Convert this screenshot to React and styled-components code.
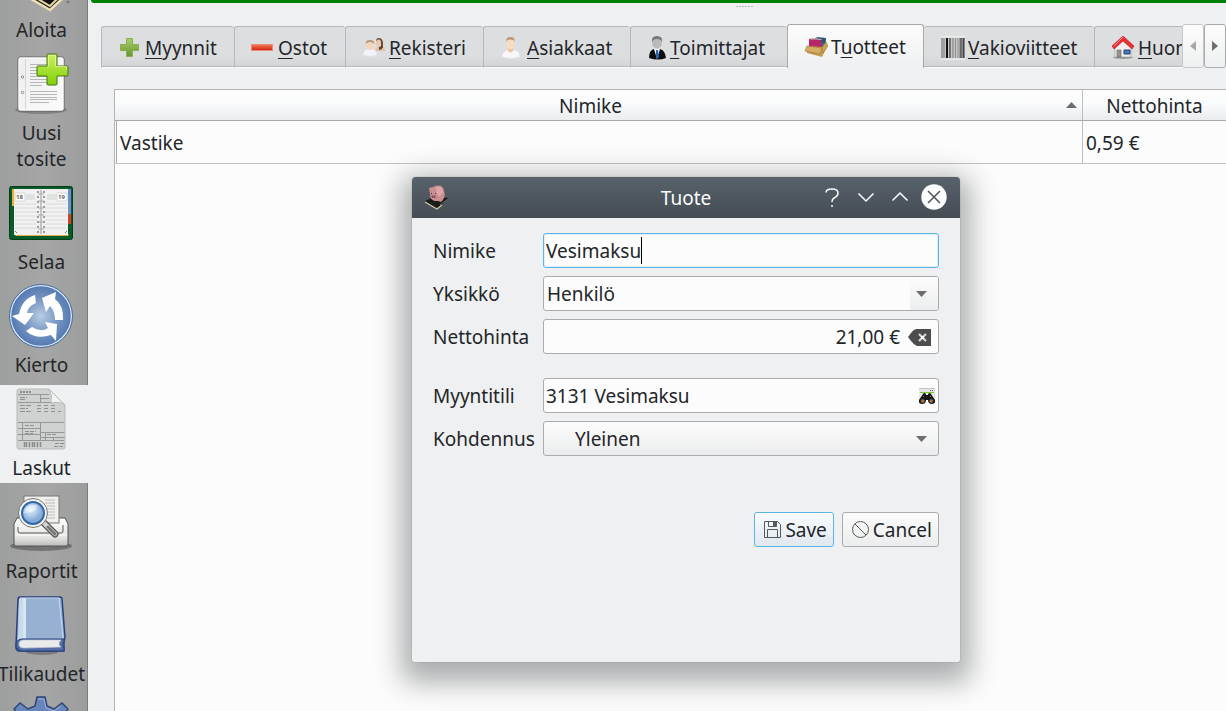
import React from 'react';
import styled, { createGlobalStyle, css } from 'styled-components';

const GlobalStyle = createGlobalStyle`
  * { box-sizing: border-box; }
  html, body, #root { height: 100%; }
  body {
    margin: 0;
    overflow: hidden;
    background: #eff0f1;
    color: #232629;
    font-family: "Noto Sans", sans-serif;
    font-size: 19px;
    line-height: 26px;
  }
  button, input, select { font: inherit; color: inherit; margin: 0; }
  svg { display: block; flex: none; }
`;

const Desktop = styled.div`
  position: relative;
  display: flex;
  height: 100vh;
  overflow: hidden;
`;

const Sidebar = styled.nav`
  flex: 0 0 88px;
  overflow: hidden;
  background:
    linear-gradient(#7c7d7e, #7c7d7e) right / 1px 100% no-repeat,
    linear-gradient(90deg, #9d9e9e, #a6a6a6 50%, #9b9c9c);
`;

/* The tool list is scrolled so that its first entry is partly hidden. */
const ToolList = styled.div`
  display: flex;
  flex-direction: column;
  gap: 5px;
  margin-top: -53px;
`;

const ToolButton = styled.button`
  display: flex;
  flex-direction: column;
  align-items: center;
  gap: 4px;
  flex: none;
  padding: 2px 6px 2px 0;
  border: 0;
  background: ${(p) => (p.$active ? '#eff0f1' : 'transparent')};
`;

const ToolLabel = styled.span`
  width: 82px;
  padding-left: 1px;
  display: flex;
  justify-content: center;
  text-align: center;
`;

const Main = styled.main`
  flex: 1;
  min-width: 0;
  display: flex;
  flex-direction: column;
`;

const ProgressLine = styled.div`
  flex: none;
  height: 3px;
  margin-left: 3px;
  background: #008000;
  border-bottom-left-radius: 4px;
`;

const Splitter = styled.div`
  flex: none;
  display: flex;
  justify-content: center;
  gap: 1px;
  height: 21px;
  padding: 3px 0 0 174px;
`;

const SplitterDot = styled.span`
  width: 2px;
  height: 1px;
  background: #b9babc;
`;

const TabBar = styled.div`
  flex: none;
  display: flex;
  height: 44px;
  margin-left: 13px;
`;

const Tabs = styled.div`
  flex: 1;
  min-width: 0;
  display: flex;
  align-items: flex-end;
  overflow: hidden;
`;

const Tab = styled.button`
  flex: none;
  width: ${(p) => p.$width}px;
  display: flex;
  align-items: center;
  gap: 3px;
  height: 42px;
  padding: 1px 0 0 16px;
  border: 1px solid #b7b8ba;
  border-right-width: 0;
  border-bottom-color: #fcfcfc;
  border-radius: 3px 3px 0 0;
  background: linear-gradient(#dddee0 70%, #d3d4d6);
  box-shadow: inset 0 -1px #b7b8ba;
  white-space: nowrap;
  ${(p) => p.$selected && css`
    height: 44px;
    padding-bottom: 1px;
    border-right-width: 1px;
    border-color: #a9aaac;
    border-bottom: 0;
    background: linear-gradient(#fcfcfc, #eff0f1);
    box-shadow: none;
    & + button { border-left-width: 0; padding-left: 17px; }
  `}
`;

const Mnemonic = styled.u`
  text-decoration-thickness: 1px;
  text-underline-offset: 3px;
  text-decoration-skip-ink: none;
`;

const TabScroll = styled.button`
  flex: 0 0 22px;
  display: grid;
  place-items: center;
  padding: 0;
  border: 1px solid ${(p) => (p.disabled ? '#c6c7c9' : '#a9aaac')};
  border-radius: 3px;
  background: linear-gradient(#fcfcfc, #eff0f1);
`;

const TableFrame = styled.section`
  flex: 1;
  margin: 21px 0 0 26px;
  border: 1px solid #b2b4b6;
  border-right: 0;
  border-bottom: 0;
  background: #fcfcfc;
`;

const Table = styled.table`
  width: 100%;
  border-collapse: separate;
  border-spacing: 0;
  table-layout: fixed;
`;

const HeaderCell = styled.th`
  width: ${(p) => p.$width || 'auto'};
  height: 31px;
  padding: 2px 0 0;
  font-weight: 400;
  border-bottom: 1px solid #a5a7a9;
  border-left: ${(p) => (p.$divided ? '1px solid #bcbec0' : '0')};
  background: linear-gradient(#fcfcfc, #fafbfc 45%, #ebeced);
`;

const HeaderContent = styled.div`
  display: flex;
  align-items: center;
  padding-right: ${(p) => (p.$sorted ? '5px' : '0')};
  & > svg { margin-bottom: 2px; }
`;

const HeaderTitle = styled.span`
  flex: 1;
  text-align: center;
`;

const Cell = styled.td`
  height: 43px;
  padding: 2px 3px 0;
  border-bottom: 1px solid #c0c1c2;
  border-left: ${(p) => (p.$divided ? '1px solid #bcbec0' : '0')};
  ${(p) => p.$current && css`
    border-left: 1px solid #fcfcfc;
    box-shadow: inset 1px 0 #a5a7a9;
    padding-left: 4px;
  `}
`;

const Dialog = styled.section`
  position: absolute;
  left: 412px;
  top: 177px;
  width: 548px;
  min-height: 485px;
  border-radius: 4px 4px 2px 2px;
  overflow: hidden;
  background: #eff0f1;
  box-shadow: 0 10px 28px 10px rgba(30, 34, 38, 0.37), 0 0 1px #77797b;
`;

const TitleBar = styled.header`
  display: grid;
  grid-template-columns: 1fr auto 1fr;
  align-items: center;
  height: 41px;
  padding: 0 9px;
  color: #fcfcfc;
  background: linear-gradient(#57626a, #454c54);
  & > svg { margin-left: 4px; }
`;

const DialogTitle = styled.h1`
  margin: 0;
  font-size: 19px;
  font-weight: 400;
`;

const WindowButtons = styled.div`
  display: flex;
  justify-content: flex-end;
`;

const WindowButton = styled.button`
  width: 34px;
  height: 34px;
  display: grid;
  place-items: center;
  padding: 0 0 1px;
  border: 0;
  background: none;
`;

const Form = styled.form`
  padding: 15px 21px;
`;

const FieldGroup = styled.div`
  display: grid;
  grid-template-columns: 110px 1fr;
  align-items: center;
  gap: 8px 0;
  margin-bottom: ${(p) => (p.$last ? '56px' : '24px')};
`;

const FieldBox = styled.div`
  position: relative;
  display: flex;
  align-items: center;
  height: 35px;
  border: 1px solid ${(p) => (p.$focused ? '#5ab4e6' : '#a9abad')};
  border-radius: 3px;
  background: ${(p) => (p.$raised ? 'linear-gradient(#fcfcfc, #ebeced)' : '#fcfcfc')};
  box-shadow: ${(p) => (p.$focused ? 'inset 0 0 0 1px #e3eef4' : 'none')};
  overflow: hidden;
`;

const TextInput = styled.input`
  flex: 1;
  min-width: 0;
  height: 33px;
  padding: 0 2px;
  border: 0;
  outline: 0;
  background: transparent;
  text-align: ${(p) => p.$align || 'left'};
`;

const Caret = styled.span`
  position: absolute;
  left: 97px;
  top: 3px;
  width: 1px;
  height: 27px;
  background: #000;
`;

const Select = styled.select`
  appearance: none;
  position: relative;
  width: 100%;
  height: 33px;
  padding: 0 30px 0 ${(p) => (p.$indented ? '31px' : '3px')};
  border: 0;
  outline: 0;
  background: transparent;
`;

const SelectArrow = styled.span`
  position: absolute;
  right: 0;
  width: 28px;
  height: 33px;
  padding-left: 6px;
  display: flex;
  align-items: center;
  background: ${(p) => (p.$shaded ? 'linear-gradient(#fcfcfc, #ecedee)' : 'none')};
  pointer-events: none;
`;

const FieldAction = styled.button`
  flex: none;
  padding: 0 ${(p) => p.$inset} 0 6px;
  border: 0;
  background: none;
`;

const Buttons = styled.div`
  display: flex;
  justify-content: flex-end;
  gap: 8px;
`;

const PushButton = styled.button`
  display: flex;
  align-items: center;
  gap: 3px;
  height: 35px;
  padding: 0 6px 0 9px;
  border: 1px solid ${(p) => (p.$primary ? '#5ab4e6' : '#a9abad')};
  border-radius: 3px;
  background: ${(p) => (p.$primary
    ? 'linear-gradient(#fafcfd, #e0e8ee)'
    : 'linear-gradient(#fcfcfc, #ebeced)')};
`;

/* ---------- sidebar drawings ---------- */

const PiggyLarge = () => (
  <svg width="64" height="64" viewBox="0 0 64 64">
    <path d="M14 46 40 36 56 48 41 62Z" fill="#282521" />
    <path d="M22 50 41 61 53 50" fill="none" stroke="#eee0b8" strokeWidth="2.500" />
    <path d="M29 50 41 57 50 48 40 44Z" fill="#11100f" stroke="#e4d5ac" strokeWidth="2" />
    <path d="M58 54 60 52" stroke="#777" strokeWidth="2" />
  </svg>
);

const NewVoucher = () => (
  <svg width="64" height="64" viewBox="0 0 64 64">
    <defs>
      <linearGradient id="nvPlus" x2="0" y2="1"><stop stopColor="#cdf05a" /><stop offset="1" stopColor="#7fd00b" /></linearGradient>
      <linearGradient id="nvPage" x2="1" y2="1"><stop stopColor="#ededed" /><stop offset="1" stopColor="#fbfbfb" /></linearGradient>
    </defs>
    <ellipse cx="32" cy="58" rx="26" ry="4" fill="#000" opacity=".2" />
    <rect x="9" y="5" width="46" height="54" rx="2" fill="url(#nvPage)" stroke="#636463" />
    <rect x="10" y="6" width="44" height="52" rx="1" fill="none" stroke="#fff" />
    <path d="M16.500 7v50" stroke="#d4d5d4" />
    <g fill="#fff" stroke="#888" ><circle cx="13.500" cy="25" r="1.200" /><circle cx="13.500" cy="40.500" r="1.200" /></g>
    <path d="M21 12.500h26M21 15.500h26M21 18.500h26M21 21.500h26M21 24.500h26M21 27.500h26M21 30.500h26M21 33.500h12M21 39.500h27M21 42.500h27M21 45.500h27M21 47.500h27M21 50.500h19" stroke="#b5b6b5" />
    <path d="M39 2h8q1 0 1 1v11h10q1 0 1 1v8q0 1-1 1H48v8q0 1-1 1h-8q-1 0-1-1v-8h-9q-1 0-1-1v-8q0-1 1-1h9V3q0-1 1-1Z" fill="url(#nvPlus)" stroke="#42750e" />
    <path d="M39.500 14.500V3.500h7v11h11v3" fill="none" stroke="#e4f9a5" opacity=".8" />
  </svg>
);

const Planner = () => (
  <svg width="64" height="64" viewBox="0 0 64 64">
    <rect x=".5" y="5.500" width="63" height="53" rx="2" fill="#075b28" stroke="#033c18" />
    <path d="M3 8h5v17H3Z" fill="#f4aa37" />
    <path d="M56 8h6v26h-6Z" fill="#6d8fd0" />
    <path d="M57 33h5v10h-3l-2 2Z" fill="#d63d22" />
    <path d="M5 53h55l-1 2H7Z" fill="#e5a954" />
    <rect x="5" y="8" width="27" height="46" fill="#f1f1f1" />
    <rect x="32" y="8" width="27" height="46" fill="#f1f1f1" />
    <path d="M6 23h22M6 27h22M6 31h22M6 35h22M6 39h22M6 43h22M6 47h22M36 23h22M36 27h22M36 31h22M36 35h22M36 39h22M36 43h22M36 47h22" stroke="#d9dada" />
    <path d="M17 13h9v6h-9ZM38 13h9v6h-9Z" fill="#e0e1e1" />
    <path d="M6 12h10v8H6ZM48 12h10v8H48Z" fill="#fff" stroke="#d5d5d5" />
    <text x="7" y="18" fontSize="6" fontWeight="700" fill="#666">18</text>
    <text x="49" y="18" fontSize="6" fontWeight="700" fill="#666">19</text>
    <path d="M32 9v44" stroke="#999" strokeWidth="1" />
    <g stroke="#9a9b9b" strokeWidth="2" strokeDasharray="2 3"><path d="M29 10v44M35 10v44" /></g>
    <path d="M29 13h6M29 20h6M29 27h6M29 34h6M29 41h6M29 48h6" stroke="#aaa" />
    <path d="M6 50l2 2M58 50l-2 2" stroke="#777" />
  </svg>
);

const Cycle = () => (
  <svg width="64" height="64" viewBox="0 0 64 64">
    <defs>
      <radialGradient id="cyBg"><stop stopColor="#b9cde4" /><stop offset=".55" stopColor="#7896c3" /><stop offset="1" stopColor="#5379af" /></radialGradient>
    </defs>
    <circle cx="32" cy="32" r="30.500" fill="url(#cyBg)" stroke="#dce9f7" strokeWidth="1.500" />
    <circle cx="32" cy="32" r="31.500" fill="none" stroke="#456ca5" />
    <g fill="#fff">
      <path d="M26 11Q13 15 10 30L3 32 16 41 25 29 18 29Q19 22 27 19Z" />
      <path d="M33 14 47 8 46 15Q55 22 54 36H46Q46 27 41 22L37 28Z" />
      <path d="M23 43Q32 49 39 44L36 38 48 40 47 57 42 51Q27 56 17 47Z" />
    </g>
  </svg>
);

const Invoice = () => (
  <svg width="64" height="64" viewBox="0 0 64 64">
    <defs><linearGradient id="inFold" x2="1" y1="1" y2="0"><stop offset=".4" stopColor="#f3f3f3" /><stop offset="1" stopColor="#b7b7b7" /></linearGradient></defs>
    <path d="M10 2h30L56 18v42q0 2-2 2H10q-2 0-2-2V4q0-2 2-2Z" fill="#d0d1d1" stroke="#b8b9b9" />
    <path d="M9 7.500h31M9 15.500h38M31.500 8v8M31.500 11.500h9M9 35.500h46M9 41.500h22M9 47.500h22M31.500 36v18M31.500 45.500h24M31.500 50.500h24M9 53.500h46M13.500 36v18M36.500 45v9M44.500 50v4" fill="none" stroke="#969797" />
    <path d="M11 5h12" stroke="#8a8b8b" strokeWidth="2" strokeDasharray="2 1" />
    <path d="M11 10.500h7M11 12.500h6M11 18.500h11M11 21.500h8M11 24.500h11" stroke="#8f9090" strokeDasharray="5 1" />
    <path d="M28 18.500h20M28 21.500h20M28 24.500h24" stroke="#8f9090" strokeDasharray="4 3" />
    <path d="M16 38.500h9M16 44.500h11M38 47.500h9M16 46.500h8M46 56.500h10M45 59.500h9" stroke="#8f9090" strokeDasharray="4 1" />
    <path d="M15.500 55v5M17.500 55v5M20.500 55v5M23.500 55v5M25.500 55v5M28.500 55v5M31.500 55v5" stroke="#8a8b8b" strokeWidth="1.500" />
    <path d="M40 2 56 18Q52 14 42 16 44 8 40 2Z" fill="url(#inFold)" stroke="#b0b1b1" strokeWidth=".7" />
  </svg>
);

const Report = () => (
  <svg width="64" height="64" viewBox="0 0 64 64">
    <defs>
      <linearGradient id="rpBox" x2="0" y2="1"><stop stopColor="#fff" /><stop offset=".7" stopColor="#e4e4e1" /><stop offset="1" stopColor="#bbbcb9" /></linearGradient>
      <radialGradient id="rpLens" cx=".4" cy=".35"><stop stopColor="#e8f3fc" /><stop offset="1" stopColor="#85abd9" /></radialGradient>
    </defs>
    <ellipse cx="32" cy="56" rx="31" ry="5" fill="#000" opacity=".3" />
    <path d="M8 28h48l3 6v20q0 2-2 2H7q-2 0-2-2V34Z" fill="url(#rpBox)" stroke="#555753" />
    <path d="M9 37v4q0 2 2 2h41q2 0 2-2v-6" fill="none" stroke="#555753" />
    <path d="M6 45h52" stroke="#fff" />
    <rect x="15" y="6" width="35" height="27" fill="#f0f0ee" stroke="#777974" />
    <path d="M36 10h10M36 13h10M38 16h8M38 19h8M38 22h8M38 25h8M38 28h8" stroke="#bbb" />
    <path d="m34 32 12 12" stroke="#555753" strokeWidth="7" strokeLinecap="round" />
    <path d="m34 32 12 12" stroke="#d4d5d1" strokeWidth="4.500" strokeLinecap="round" />
    <path d="m39 37 7 7" stroke="#777974" strokeWidth="3" strokeLinecap="round" />
    <circle cx="24" cy="23" r="14.500" fill="#f4f4f2" stroke="#777974" />
    <circle cx="24" cy="23" r="11" fill="url(#rpLens)" stroke="#3267a8" strokeWidth="2" />
    <path d="M15 23Q17 14 27 15 31 22 15 23Z" fill="#fff" opacity=".45" />
  </svg>
);

const Book = () => (
  <svg width="64" height="64" viewBox="0 0 64 64">
    <ellipse cx="33" cy="59" rx="16" ry="3" fill="#000" opacity=".25" />
    <path d="M11 4h40q2 0 2 2l3 39-1 3v10H11q-5 0-4-6L9 7q0-3 2-3Z" fill="#96b1d2" stroke="#29417c" strokeWidth="1.500" />
    <path d="M11 5h6v40q-6 0-8 4L10 7Z" fill="#c9daea" />
    <path d="M15 5v41M16 5v40" stroke="#e4eef6" />
    <path d="M55 46H14q-7 0-7 6 1 6 7 6h41v-3q-3-3 0-7Z" fill="#536ea7" stroke="#29417c" />
    <path d="M52 47H15q-5 0-5 4 0 4 5 4l37-1q-4-3 0-7Z" fill="#e9eaeb" stroke="#c4c8cd" strokeWidth=".7" />
    <path d="M11 5h39l4 40" fill="none" stroke="#c8d9eb" />
  </svg>
);

const Gear = () => (
  <svg width="64" height="64" viewBox="0 0 64 64">
    <path d="M28 1h8l2 9 7 3 8-6 6 6-6 8 3 7v36H8V28l3-7-6-8 6-6 8 6 7-3Z" fill="#6886ba" stroke="#2d4677" strokeWidth="1.500" />
    <path d="M29 3h6l2 9 8 3 7-5" fill="none" stroke="#9db4d6" />
  </svg>
);

/* ---------- tab drawings ---------- */

const TabSvg = ({ w = 24, children }) => (
  <svg width={w} height="24" viewBox={`0 0 ${w} 24`}>{children}</svg>
);

const PlusIcon = () => (
  <TabSvg>
    <defs><linearGradient id="tPlus" x2="0" y2="1"><stop stopColor="#a8ce66" /><stop offset="1" stopColor="#67962e" /></linearGradient></defs>
    <path d="M8.500 2.500h6v6h6v6h-6v6h-6v-6h-6v-6h6Z" fill="url(#tPlus)" stroke="#88ad55" />
  </TabSvg>
);

const MinusIcon = () => (
  <TabSvg>
    <defs><linearGradient id="tMinus" x2="0" y2="1"><stop stopColor="#ff7954" /><stop offset="1" stopColor="#c8230c" /></linearGradient></defs>
    <rect x=".5" y="8.500" width="21" height="6" fill="url(#tMinus)" stroke="#e98a76" />
  </TabSvg>
);

const PeopleIcon = () => (
  <TabSvg>
    <path d="M13 14Q15 10 18 10q5 0 5 5H14Z" fill="#dfc3a6" />
    <path d="M14 5q0-3 3-3t4 4v6h-2V7l-4-2Z" fill="#6b4e3a" />
    <ellipse cx="16.500" cy="7" rx="2.500" ry="3.500" fill="#efc9a7" />
    <path d="M17 11v3l3-1v-3Z" fill="#6b4429" />
    <path d="M1 19q0-5 5-6h4q5 1 5 6-7 3-14 0Z" fill="#f3f4fa" stroke="#dcdde5" strokeWidth=".6" />
    <ellipse cx="8" cy="9" rx="3.700" ry="5" fill="#f5d5b9" />
    <path d="M4 8q-1-4 4-4t4 4q-1-2-4-2T4 8Z" fill="#b8967c" />
  </TabSvg>
);

const PersonIcon = () => (
  <TabSvg>
    <path d="M2 21q0-6 6-7h6q6 1 6 7-9 3-18 0Z" fill="#f7f7fc" stroke="#dddfe7" strokeWidth=".6" />
    <path d="M8 11h5v4q-2 3-5 0Z" fill="#eec6a2" />
    <ellipse cx="10.500" cy="7.500" rx="4" ry="5.500" fill="#f7dcc2" />
    <path d="M6.500 6q-1-5 4-5t4 5l-1-2q-3-1-6 0Z" fill="#b8967c" />
  </TabSvg>
);

const SuitIcon = () => (
  <TabSvg w={20}>
    <path d="M2 22q0-8 5-9h6q5 1 6 9-8 3-17 0Z" fill="#0c0d0f" />
    <path d="M7 13h6l-3 10Z" fill="#f5f7f9" />
    <path d="m9 14 2 0 1 7-2 2-1-2Z" fill="#2965b7" />
    <ellipse cx="10" cy="6.500" rx="5" ry="6" fill="#b8babb" />
    <path d="M5 6q-1-6 5-6t5 6q-1-3-5-3T5 6Z" fill="#77797b" />
  </TabSvg>
);

const BoxIcon = () => (
  <TabSvg>
    <path d="M9 4 14 2 22 3 22 12H9Z" fill="#287384" />
    <path d="M13 3 21 3v5h-7Z" fill="#36506b" />
    <path d="M5 4 17 5 18 13H5Z" fill="#b72669" />
    <path d="m5 4 3-1 10 1-1 1Z" fill="#e3a1ba" />
    <path d="M3 11 18 12 22 7 23 12 18 22 3 18Z" fill="#c59b50" />
    <path d="M3 11 1 16 16 19 18 13Z" fill="#d4ae66" stroke="#a87b35" strokeWidth=".7" />
    <path d="m18 13 4-6 2 4-5 7Z" fill="#d0a354" stroke="#a87b35" strokeWidth=".6" />
  </TabSvg>
);

const BarcodeIcon = () => (
  <TabSvg>
    <path d="M0 1h24v22H0Z" fill="#c9cacb" />
    <path d="M0 1h24M0 23h24" stroke="#fcfcfc" />
    <path d="M1 2v20M3 2v20M12 2v20M19 2v20" stroke="#777" />
    <path d="M6 2v20" stroke="#111" strokeWidth="2" />
    <path d="M22.500 2v20" stroke="#444" strokeWidth="2" />
    <path d="M9 2v20M20 2v20" stroke="#555" strokeWidth="1.500" />
    <path d="M14.500 2v20M17 2v20" stroke="#8a8b8c" />
  </TabSvg>
);

const HouseIcon = () => (
  <TabSvg>
    <ellipse cx="12" cy="21.500" rx="10" ry="1.500" fill="#999" />
    <path d="M4 11 12 4l8 7v10H4Z" fill="#eeeeec" stroke="#999" strokeWidth=".6" />
    <path d="M6 14h4v7H6Z" fill="#96938c" stroke="#6d6b66" strokeWidth=".6" />
    <path d="M13 14h6v4h-6Z" fill="#467ac1" stroke="#29446d" />
    <path d="M12 0 23 10l-2 3-9-8-9 8-2-3Z" fill="#e93131" stroke="#b51b22" strokeWidth=".6" />
    <path d="m12 1-9 9" stroke="#ff8c85" />
  </TabSvg>
);

/* ---------- dialog drawings ---------- */

const PiggySmall = () => (
  <svg width="26" height="26" viewBox="0 0 26 26">
    <path d="M0 16 9 12 24 13 12 24Z" fill="#1b1b18" />
    <path d="m0 17 12 7 5-4" fill="none" stroke="#cbc4aa" strokeWidth="1.300" />
    <path d="M15 20 24 13" stroke="#68665e" />
    <path d="M4 3 8 2l2-1Q18-1 19 6q2 5-1 9l-2 2-3-1-3 0Q5 15 5 9Z" fill="#c98e90" />
    <path d="M11 2Q18 0 18 8l-4 4Q11 9 11 2Z" fill="#dda5a7" />
    <path d="M6 10h5v3H7Z" fill="#ad6f74" />
    <path d="M6 8.500h1M10 8.500h1M7 12h1M9 12h1" stroke="#392d30" />
  </svg>
);

const TitleSvg = ({ children }) => (
  <svg width="26" height="26" viewBox="0 0 26 26" fill="none" stroke="#fcfcfc" strokeWidth="1.500">{children}</svg>
);

const HelpGlyph = () => <TitleSvg><path d="M7 8.500Q7 5 13 5t6 4q0 3-4 5-2 1-2 4M13 21v2" /></TitleSvg>;
const DownGlyph = () => <TitleSvg><path d="m5.500 9.500 7.500 7.500 7.500-7.500" /></TitleSvg>;
const UpGlyph = () => <TitleSvg><path d="M5.500 16.500 13 9l7.500 7.500" /></TitleSvg>;
const CloseGlyph = () => (
  <TitleSvg>
    <circle cx="13" cy="13" r="12.700" fill="#fcfcfc" stroke="none" />
    <path d="m7 7 12 12M19 7 7 19" stroke="#4c555d" />
  </TitleSvg>
);

const ClearGlyph = () => (
  <svg width="23" height="18" viewBox="0 0 23 18">
    <path d="M0 9 3 5Q6 1 9 1h14v17H9Q6 17 3 13Z" fill="#4d4d4d" />
    <path d="m11 6 7 7m0-7-7 7" stroke="#d5d6d6" strokeWidth="2.200" />
    <rect x="13" y="8" width="3" height="3" fill="#fcfcfc" />
  </svg>
);

const FindGlyph = () => (
  <svg width="16" height="16" viewBox="0 0 16 16">
    <path d="M0 0h16v12H0Z" fill="#e5e6e6" />
    <path d="M0 .5h16" stroke="#c5c6c7" />
    <path d="M11 2.500h1M13 2.500h1" stroke="#555" />
    <path d="M1 4.500h14" stroke="#79c52d" />
    <path d="M4 6q1-2 3 0v1h2V6q2-2 3 0l4 6q1 4-3 4-4 0-4-4H7q0 4-4 4T0 12Z" fill="#161616" />
    <circle cx="3.700" cy="13" r="1.800" fill="#b87139" stroke="#555" strokeWidth=".7" />
    <circle cx="12.300" cy="13" r="1.800" fill="#b87139" stroke="#555" strokeWidth=".7" />
    <path d="M4 8.500h1M11 8.500h1" stroke="#777" />
  </svg>
);

const SaveGlyph = () => (
  <svg width="18" height="18" viewBox="0 0 18 18" fill="none" stroke="#55585a">
    <path d="M.5.500h13l3 3v13H.5Z" />
    <path d="M4.500.5v5h8v-5M3.500 16.500v-8h10v8" />
    <path d="M9 1h3v4H9Z" fill="#55585a" stroke="none" />
  </svg>
);

const CancelGlyph = () => (
  <svg width="18" height="18" viewBox="0 0 18 18" fill="none" stroke="#55585a">
    <circle cx="8.500" cy="8.500" r="8" /><path d="m3 3 11 11" />
  </svg>
);

const Triangle = ({ dir, color = '#6b6d6f' }) => {
  const shapes = {
    up: [11, 6, 'M0 6 5.500 0 11 6Z'],
    down: [11, 6, 'M0 0h11L5.500 6Z'],
    left: [6, 10, 'M6 0v10L0 5Z'],
    right: [6, 10, 'M0 0v10l6-5Z'],
  };
  const [w, h, d] = shapes[dir];
  return <svg width={w} height={h} viewBox={`0 0 ${w} ${h}`}><path d={d} fill={color} /></svg>;
};

const tools = [
  ['Aloita', PiggyLarge],
  ['Uusi tosite', NewVoucher],
  ['Selaa', Planner],
  ['Kierto', Cycle],
  ['Laskut', Invoice],
  ['Raportit', Report],
  ['Tilikaudet', Book],
  ['', Gear],
];

const tabs = [
  ['', 'M', 'yynnit', PlusIcon, 133],
  ['', 'O', 'stot', MinusIcon, 111],
  ['', 'R', 'ekisteri', PeopleIcon, 138],
  ['', 'A', 'siakkaat', PersonIcon, 147],
  ['', 'T', 'oimittajat', SuitIcon, 157],
  ['T', 'u', 'otteet', BoxIcon, 137],
  ['', 'V', 'akioviitteet', BarcodeIcon, 170],
  ['', 'H', 'uoneistot', HouseIcon, 154],
];

export default function App() {
  return (
    <>
      <GlobalStyle />
      <Desktop>
        <Sidebar>
          <ToolList>
            {tools.map(([label, Icon]) => (
              <ToolButton key={label} type="button" $active={label === 'Laskut'}>
                <Icon />
                {label && <ToolLabel>{label}</ToolLabel>}
              </ToolButton>
            ))}
          </ToolList>
        </Sidebar>

        <Main>
          <ProgressLine />
          <Splitter>
            {[0, 1, 2, 3, 4, 5].map((i) => <SplitterDot key={i} />)}
          </Splitter>
          <TabBar>
            <Tabs role="tablist">
              {tabs.map(([before, key, after, Icon, width]) => (
                <Tab
                  key={before + key + after}
                  type="button"
                  role="tab"
                  $width={width}
                  $selected={key === 'u'}
                  aria-selected={key === 'u'}
                >
                  <Icon />
                  <span>{before}<Mnemonic>{key}</Mnemonic>{after}</span>
                </Tab>
              ))}
            </Tabs>
            <TabScroll type="button" disabled aria-label="Edelliset"><Triangle dir="left" color="#a6a8a9" /></TabScroll>
            <TabScroll type="button" aria-label="Seuraavat"><Triangle dir="right" /></TabScroll>
          </TabBar>

          <TableFrame>
            <Table>
              <thead>
                <tr>
                  <HeaderCell scope="col">
                    <HeaderContent $sorted>
                      <HeaderTitle>Nimike</HeaderTitle>
                      <Triangle dir="up" />
                    </HeaderContent>
                  </HeaderCell>
                  <HeaderCell scope="col" $width="144px" $divided>Nettohinta</HeaderCell>
                </tr>
              </thead>
              <tbody>
                <tr>
                  <Cell $current>Vastike</Cell>
                  <Cell $divided>0,59 €</Cell>
                </tr>
              </tbody>
            </Table>
          </TableFrame>
        </Main>

        <Dialog role="dialog" aria-labelledby="dialog-title">
          <TitleBar>
            <PiggySmall />
            <DialogTitle id="dialog-title">Tuote</DialogTitle>
            <WindowButtons>
              <WindowButton type="button" aria-label="Ohje"><HelpGlyph /></WindowButton>
              <WindowButton type="button" aria-label="Pienennä"><DownGlyph /></WindowButton>
              <WindowButton type="button" aria-label="Suurenna"><UpGlyph /></WindowButton>
              <WindowButton type="button" aria-label="Sulje"><CloseGlyph /></WindowButton>
            </WindowButtons>
          </TitleBar>
          <Form onSubmit={(e) => e.preventDefault()}>
            <FieldGroup>
              <label htmlFor="nimike">Nimike</label>
              <FieldBox $focused>
                <TextInput id="nimike" defaultValue="Vesimaksu" />
                <Caret />
              </FieldBox>
              <label htmlFor="yksikko">Yksikkö</label>
              <FieldBox>
                <SelectArrow $shaded><Triangle dir="down" /></SelectArrow>
                <Select id="yksikko"><option>Henkilö</option></Select>
              </FieldBox>
              <label htmlFor="hinta">Nettohinta</label>
              <FieldBox>
                <TextInput id="hinta" defaultValue="21,00 €" $align="right" />
                <FieldAction type="button" $inset="7px" aria-label="Tyhjennä"><ClearGlyph /></FieldAction>
              </FieldBox>
            </FieldGroup>
            <FieldGroup $last>
              <label htmlFor="tili">Myyntitili</label>
              <FieldBox>
                <TextInput id="tili" defaultValue="3131 Vesimaksu" />
                <FieldAction type="button" $inset="3px" aria-label="Etsi"><FindGlyph /></FieldAction>
              </FieldBox>
              <label htmlFor="kohdennus">Kohdennus</label>
              <FieldBox $raised>
                <SelectArrow><Triangle dir="down" /></SelectArrow>
                <Select id="kohdennus" $indented><option>Yleinen</option></Select>
              </FieldBox>
            </FieldGroup>
            <Buttons>
              <PushButton type="submit" $primary><SaveGlyph />Save</PushButton>
              <PushButton type="button"><CancelGlyph />Cancel</PushButton>
            </Buttons>
          </Form>
        </Dialog>
      </Desktop>
    </>
  );
}
